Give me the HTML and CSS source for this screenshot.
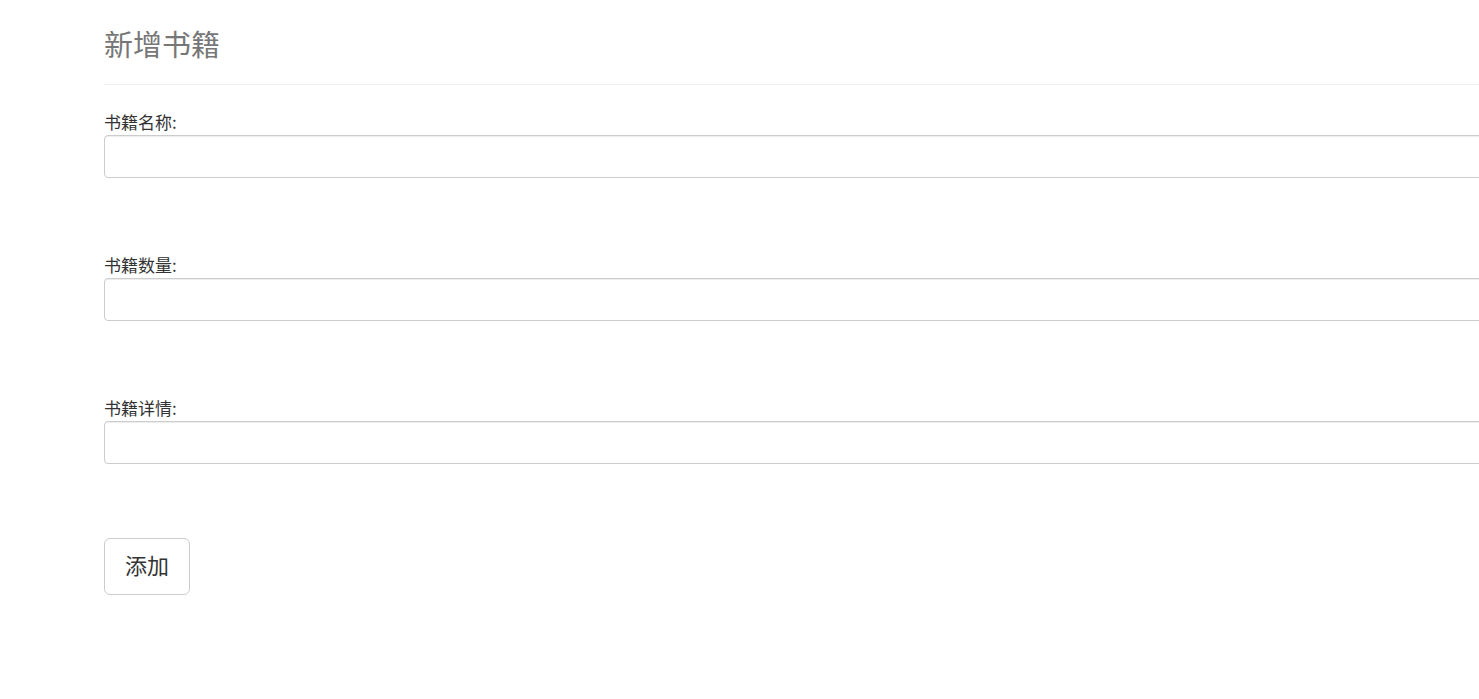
FILE: index.html
```html
<!DOCTYPE html>
<html lang="zh-CN">
<head>
    <meta charset="UTF-8">
    <meta name="viewport" content="width=device-width, initial-scale=1.0">
    <title>新增书籍</title>
    <link rel="stylesheet" href="styles.css">
</head>
<body>
    <div class="container">
        <div class="page-header">
            <h1>新增书籍</h1>
        </div>
        <form class="book-form">
            <div class="form-group">
                <label for="bookName">书籍名称:</label>
                <input type="text" id="bookName" class="form-control">
            </div>
            <div class="form-group">
                <label for="bookCount">书籍数量:</label>
                <input type="text" id="bookCount" class="form-control">
            </div>
            <div class="form-group">
                <label for="bookDetail">书籍详情:</label>
                <input type="text" id="bookDetail" class="form-control">
            </div>
            <button type="submit" class="btn">添加</button>
        </form>
    </div>
</body>
</html>
```

FILE: styles.css
```css
html, body {
    overflow: hidden;
}
body {
    margin: 0;
    font-family: "Noto Sans CJK SC", "Liberation Sans", sans-serif;
    color: #333;
    background: #fff;
}
.container {
    width: 1500px;
    padding-left: 104px;
}
.page-header {
    padding-top: 22px;
    padding-bottom: 20px;
    border-bottom: 1px solid #eee;
}
.page-header h1 {
    margin: 0;
    font-size: 29px;
    font-weight: normal;
    line-height: 42px;
    color: #777;
}
.book-form {
    padding-top: 24px;
}
.form-group {
    margin-bottom: 74px;
}
.form-group label {
    display: block;
    font-size: 17px;
    line-height: 26px;
    color: #333;
}
.form-control {
    display: block;
    box-sizing: border-box;
    width: 100%;
    height: 43px;
    margin: 0;
    padding: 6px 12px;
    font-size: 16px;
    border: 1px solid #ccc;
    border-radius: 4px;
    box-shadow: inset 0 1px 1px rgba(0, 0, 0, .075);
}
.btn {
    display: block;
    height: 57px;
    padding: 0 20px 5px;
    font-family: inherit;
    font-size: 22px;
    color: #333;
    background: #fff;
    border: 1px solid #ccc;
    border-radius: 6px;
    cursor: pointer;
}
```
